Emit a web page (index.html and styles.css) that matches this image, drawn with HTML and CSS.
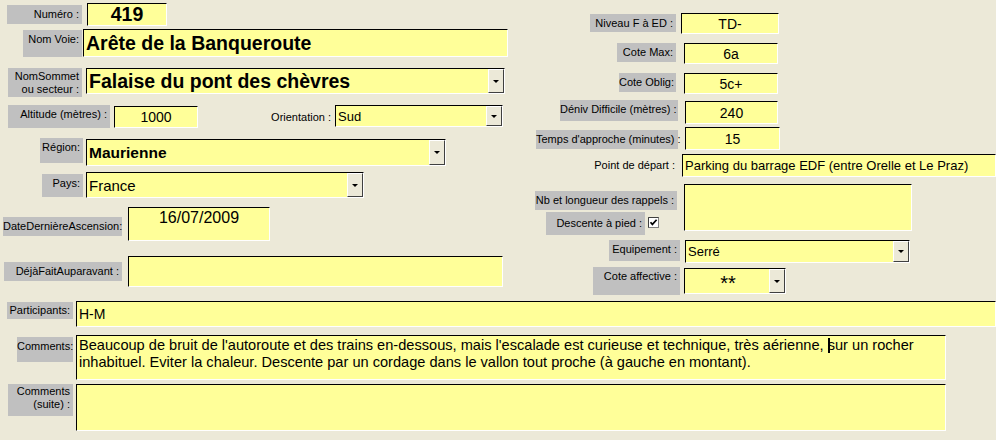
FILE: index.html
```html
<!DOCTYPE html>
<html lang="fr">
<head>
  <meta charset="UTF-8">
  <title>Voie</title>
  <link rel="stylesheet" href="styles.css">
</head>
<body>
  <div class="form">
    <div class="top">
      <div class="col-left">
        <div class="row r-numero">
          <span class="lbl l-numero">Numéro :</span>
          <div class="fld f-numero">419</div>
        </div>
        <div class="row r-voie">
          <span class="lbl l-voie">Nom Voie:</span>
          <div class="fld f-voie">Arête de la Banqueroute</div>
        </div>
        <div class="row r-sommet">
          <span class="lbl l-sommet">NomSommet<br>ou secteur :</span>
          <div class="fld combo f-sommet"><span class="val">Falaise du pont des chèvres</span><span class="btn"></span></div>
        </div>
        <div class="row r-alt">
          <span class="lbl l-alt">Altitude (mètres) :</span>
          <div class="fld f-alt">1000</div>
          <span class="lbl plain l-orient">Orientation :</span>
          <div class="fld combo f-orient"><span class="val">Sud</span><span class="btn"></span></div>
        </div>
        <div class="row r-region">
          <span class="lbl l-region">Région:</span>
          <div class="fld combo f-region"><span class="val">Maurienne</span><span class="btn"></span></div>
        </div>
        <div class="row r-pays">
          <span class="lbl l-pays">Pays:</span>
          <div class="fld combo f-pays"><span class="val">France</span><span class="btn"></span></div>
        </div>
        <div class="row r-date">
          <span class="lbl l-date">DateDernièreAscension:</span>
          <div class="fld f-date">16/07/2009</div>
        </div>
        <div class="row r-deja">
          <span class="lbl l-deja">DéjàFaitAuparavant :</span>
          <div class="fld f-deja"></div>
        </div>
      </div>

      <div class="col-right">
        <div class="row rr-niveau">
          <span class="lbl l-niveau">Niveau F à ED :</span>
          <div class="fld f-niveau">TD-</div>
        </div>
        <div class="row rr-max">
          <span class="lbl l-max">Cote Max:</span>
          <div class="fld f-max">6a</div>
        </div>
        <div class="row rr-oblig">
          <span class="lbl l-oblig">Cote Oblig:</span>
          <div class="fld f-oblig">5c+</div>
        </div>
        <div class="row rr-deniv">
          <span class="lbl l-deniv">Déniv Difficile (mètres) :</span>
          <div class="fld f-deniv">240</div>
        </div>
        <div class="row rr-temps">
          <span class="lbl l-temps">Temps d'approche (minutes) :</span>
          <div class="fld f-temps">15</div>
        </div>
        <div class="row rr-depart">
          <span class="lbl plain l-depart">Point de départ :</span>
          <div class="fld f-depart">Parking du barrage EDF (entre Orelle et Le Praz)</div>
        </div>
        <div class="row rr-rappels">
          <div class="stack">
            <span class="lbl l-rappels">Nb et longueur des rappels :</span>
            <div class="row">
              <span class="lbl l-descente">Descente à pied :</span>
              <svg class="check" width="11" height="11" viewBox="0 0 11 11">
                <rect x="0.5" y="0.5" width="10" height="10" fill="#fff" stroke="#808080"/>
                <path d="M0.5 10.5V0.5H10.5" fill="none" stroke="#404040"/>
                <path d="M2.5 5.2L4.4 7.4L8.6 2.8" fill="none" stroke="#000" stroke-width="1.7"/>
              </svg>
            </div>
          </div>
          <div class="fld f-rappels"></div>
        </div>
        <div class="row rr-equip">
          <span class="lbl l-equip">Equipement :</span>
          <div class="fld combo f-equip"><span class="val">Serré</span><span class="btn"></span></div>
        </div>
        <div class="row rr-cote">
          <span class="lbl l-cote">Cote affective :</span>
          <div class="fld combo f-cote"><span class="val">**</span><span class="btn"></span></div>
        </div>
      </div>
    </div>

    <div class="bottom">
      <div class="row b-part">
        <span class="lbl l-part">Participants:</span>
        <div class="fld f-part">H-M</div>
      </div>
      <div class="row b-comm">
        <span class="lbl l-comm">Comments:</span>
        <div class="fld memo f-comm">Beaucoup de bruit de l'autoroute et des trains en-dessous, mais l'escalade est curieuse et technique, très aérienne, <span class="caret"></span>sur un rocher<br>inhabituel. Eviter la chaleur. Descente par un cordage dans le vallon tout proche (à gauche en montant).</div>
      </div>
      <div class="row b-suite">
        <span class="lbl l-suite">Comments<br>(suite) :</span>
        <div class="fld memo f-suite"></div>
      </div>
    </div>
  </div>
</body>
</html>
```

FILE: styles.css
```css
* {
  box-sizing: border-box;
}

body {
  margin: 0;
  background-color: #ece9d8;
  font-family: "Liberation Sans", Arial, sans-serif;
  color: #000;
}

.form {
  width: 996px;
  height: 440px;
  overflow: hidden;
}

.top {
  display: flex;
  height: 295px;
}

.col-left {
  width: 530px;
  display: flex;
  flex-direction: column;
}

.col-right {
  flex: 1;
  display: flex;
  flex-direction: column;
}

.row {
  display: flex;
  align-items: flex-start;
}

/* Labels */
.lbl {
  flex-shrink: 0;
  background-color: #c0c0c0;
  font-size: 11px;
  line-height: 13px;
  text-align: right;
  padding: 3px 3px 0 0;
  white-space: nowrap;
}

.lbl.plain {
  background: none;
}

/* Fields */
.fld {
  flex-shrink: 0;
  display: flex;
  align-items: center;
  background-color: #ffff99;
  border: 1px solid;
  border-color: #000 #fff #fff #000;
  font-size: 14px;
  padding: 0 2px;
  white-space: nowrap;
  overflow: hidden;
}

.combo {
  padding-right: 0;
}

.combo .val {
  flex: 1;
}

.combo .btn {
  align-self: stretch;
  width: 16px;
  background-color: #ece9d8;
  border: 1px solid;
  border-color: #fff #404040 #404040 #fff;
  display: flex;
  align-items: center;
  justify-content: center;
}

.combo .btn::after {
  content: "";
  border-left: 3px solid transparent;
  border-right: 3px solid transparent;
  border-top: 3px solid #000;
}

.memo {
  display: block;
  white-space: normal;
  line-height: 17px;
  padding: 1px 2px;
  font-size: 14.6px;
}

.caret {
  display: inline-block;
  width: 2px;
  height: 15px;
  background-color: #000;
  vertical-align: -3px;
  margin-right: -2px;
}

/* Left column */
.r-numero { margin-top: 3px; }
.l-numero { margin: 2px 0 0 7px; width: 75px; height: 19px; }
.f-numero {
  margin-left: 5px;
  width: 80px;
  height: 23px;
  justify-content: center;
  font-size: 19.5px;
  font-weight: bold;
}

.r-voie { margin-top: 3px; }
.l-voie { margin: 1px 0 0 23px; width: 59px; height: 27px; }
.f-voie {
  margin-left: 1px;
  width: 425px;
  height: 28px;
  font-size: 19.5px;
  font-weight: bold;
}

.r-sommet { margin-top: 11px; }
.l-sommet { margin-left: 8px; width: 74px; height: 29px; padding-top: 2px; }
.f-sommet {
  margin-left: 4px;
  width: 419px;
  height: 26px;
  font-size: 19.5px;
  font-weight: bold;
}

.r-alt { margin-top: 8px; }
.l-alt { margin-left: 8px; width: 102px; height: 23px; }
.f-alt { margin: 1px 0 0 4px; width: 84px; height: 22px; justify-content: center; }
.l-orient { margin: 3px 0 0 64px; width: 72px; height: 19px; }
.f-orient { margin-left: 1px; width: 168px; height: 22px; font-size: 13px; }

.r-region { margin-top: 10px; }
.l-region { margin-left: 40px; width: 43px; height: 25px; }
.f-region {
  margin: 1px 0 0 3px;
  width: 360px;
  height: 27px;
  font-size: 15.5px;
  font-weight: bold;
}

.r-pays { margin-top: 6px; }
.l-pays { margin: 2px 0 0 42px; width: 41px; height: 23px; }
.f-pays { margin-left: 3px; width: 278px; height: 26px; font-size: 15px; }

.r-date { margin-top: 9px; }
.l-date { margin: 10px 0 0 3px; width: 119px; height: 19px; }
.f-date {
  margin-left: 6px;
  width: 142px;
  height: 34px;
  justify-content: center;
  align-items: flex-start;
  padding-top: 1px;
  font-size: 16px;
}

.r-deja { margin-top: 15px; }
.l-deja { margin: 6px 0 0 4px; width: 118px; height: 19px; }
.f-deja { margin-left: 6px; width: 375px; height: 31px; }

/* Right column */
.f-niveau, .f-max, .f-oblig, .f-deniv, .f-temps {
  justify-content: center;
}

.rr-niveau { margin-top: 13px; }
.l-niveau { margin: 1px 0 0 60px; width: 86px; height: 18px; }
.f-niveau { margin-left: 5px; width: 98px; height: 21px; }

.rr-max { margin-top: 9px; }
.l-max { margin-left: 87px; width: 59px; height: 19px; }
.f-max { margin-left: 8px; width: 94px; height: 21px; }

.rr-oblig { margin-top: 9px; }
.l-oblig { margin-left: 89px; width: 57px; height: 19px; }
.f-oblig { margin-left: 8px; width: 94px; height: 21px; }

.rr-deniv { margin-top: 6px; }
.l-deniv { margin-left: 30px; width: 118px; height: 21px; }
.f-deniv { margin: 1px 0 0 7px; width: 93px; height: 23px; }

.rr-temps { margin-top: 3px; }
.l-temps { margin: 3px 0 0 6px; width: 142px; height: 19px; }
.f-temps { margin-left: 7px; width: 95px; height: 23px; }

.rr-depart { margin-top: 4px; }
.l-depart { margin: 2px 0 0 56px; width: 92px; height: 19px; }
.f-depart { margin-left: 4px; width: 314px; height: 23px; font-size: 13px; }

.rr-rappels { margin-top: 7px; }
.stack {
  width: 154px;
  display: flex;
  flex-direction: column;
}
.l-rappels { margin: 7px 0 0 5px; width: 142px; height: 19px; }
.l-descente { margin: 2px 0 0 16px; width: 99px; height: 23px; padding-top: 5px; }
.check { margin: 7px 0 0 3px; }
.f-rappels { width: 228px; height: 47px; }

.rr-equip { margin-top: 5px; }
.l-equip { margin-left: 79px; width: 71px; height: 21px; }
.f-equip { margin-left: 5px; width: 225px; height: 23px; font-size: 13px; }

.rr-cote { margin-top: 3px; }
.l-cote { margin: 1px 0 0 63px; width: 87px; height: 28px; }
.f-cote { margin: 2px 0 0 4px; width: 102px; height: 26px; }
.f-cote .val {
  align-self: flex-start;
  text-align: center;
  font-size: 20px;
  line-height: 20px;
  padding-top: 4px;
}

/* Bottom rows */
.b-part { margin-top: 6px; }
.l-part { margin: 1px 0 0 7px; width: 66px; height: 17px; padding-top: 2px; }
.f-part { margin-left: 3px; width: 920px; height: 26px; }

.b-comm { margin-top: 8px; }
.l-comm { margin: 2px 0 0 17px; width: 56px; height: 25px; }
.f-comm { margin-left: 3px; width: 870px; height: 45px; }

.b-suite { margin-top: 4px; }
.l-suite { margin-left: 8px; width: 65px; height: 32px; padding-top: 1px; }
.f-suite { margin-left: 3px; width: 870px; height: 47px; }
```
